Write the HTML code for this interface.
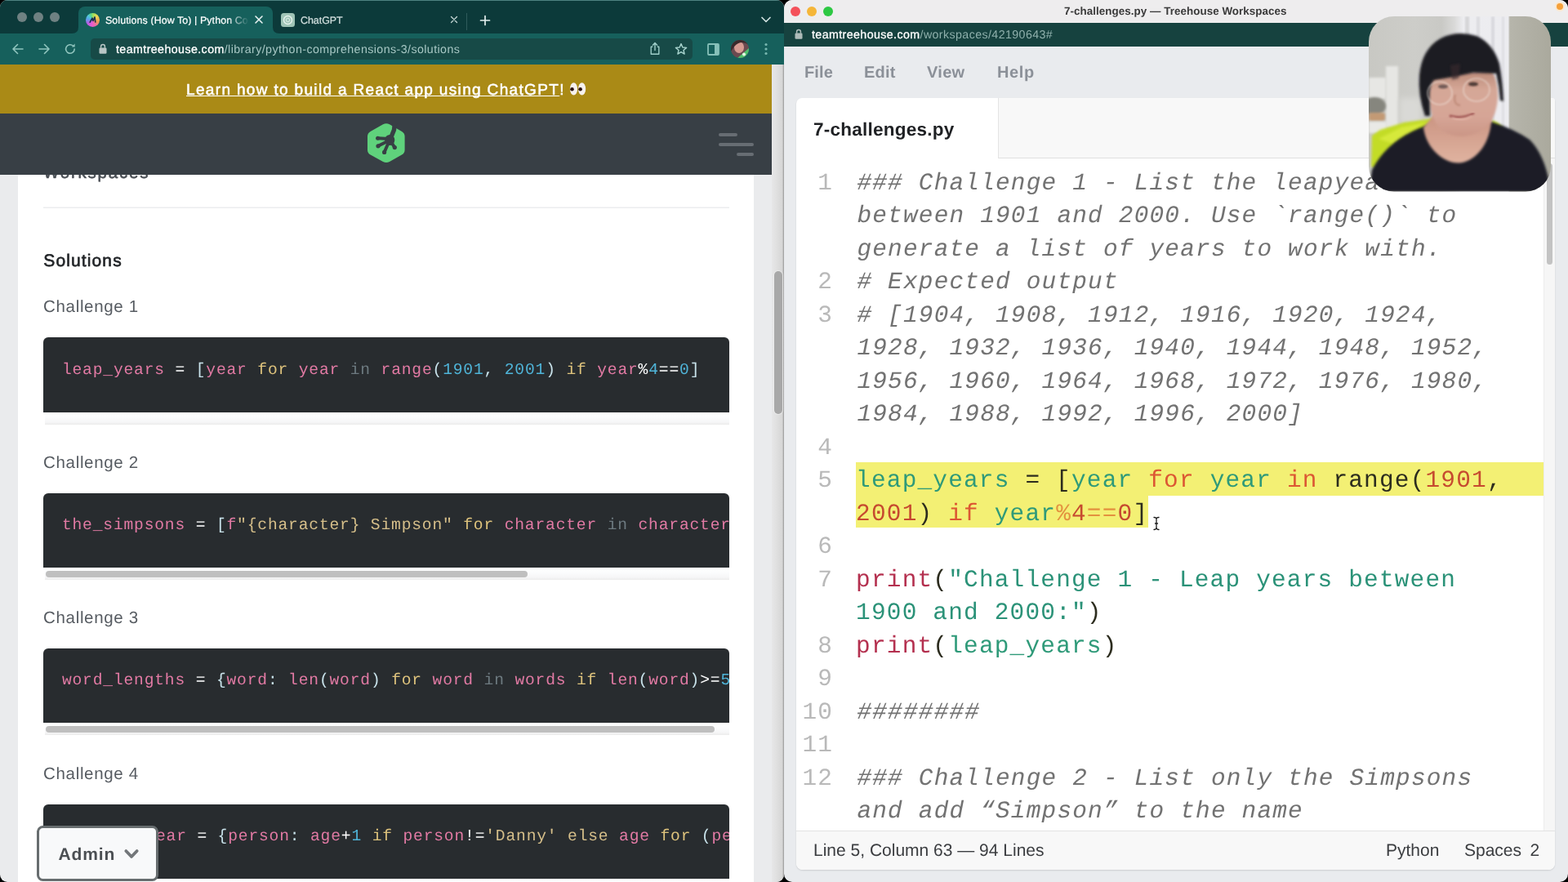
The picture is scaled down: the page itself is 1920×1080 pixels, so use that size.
<!DOCTYPE html><html lang="en"><head><meta charset="utf-8"><title>Solutions (How To) | Python Comprehensions</title><style>
*{box-sizing:border-box;margin:0;padding:0}
html,body{width:1920px;height:1080px;overflow:hidden;background:#000}
body{position:relative;text-rendering:geometricPrecision;font-family:"Liberation Sans",sans-serif;-webkit-font-smoothing:antialiased}
.abs{position:absolute}
.t{position:absolute;white-space:pre;line-height:1}
/* ---------- left window ---------- */
#lw{will-change:transform;position:absolute;left:0;top:0;width:960px;height:1080px;overflow:hidden;background:#eaebed;border-radius:9px 9px 9px 9px}
#tabstrip{position:absolute;left:0;top:0;width:960px;height:41px;background:#0c3a3a}
#ltopline{position:absolute;left:0;top:0;width:960px;height:1.3px;background:#4f8281}
#tab1{position:absolute;left:96px;top:8px;width:238px;height:33px;background:#16605c;border-radius:8px 8px 0 0}
#toolbar{position:absolute;left:0;top:41px;width:960px;height:38px;background:#16605c}
#urlbar{position:absolute;left:111px;top:46.5px;width:737px;height:26px;background:#174a47;border-radius:5px}
.tl{position:absolute;top:15px;width:12px;height:12px;border-radius:50%;background:#6f8182}
#banner{position:absolute;left:0;top:79px;width:945px;height:60px;background:#aa8a16}
#hdr{position:absolute;left:0;top:139px;width:945px;height:75px;background:#383f45}
#card{position:absolute;left:22px;top:214px;width:901px;height:866px;background:#fff}
#vsb{position:absolute;left:945px;top:79px;width:15px;height:1001px;background:linear-gradient(90deg,#e7e7e8 0,#e2e2e2 4px,#d6d6d6 13px,#a8a8a8 14.3px,#9c9c9c 15px)}
#vsbth{position:absolute;left:948.4px;top:332px;width:9.6px;height:174.5px;border-radius:5px;background:#a8a8a8;box-shadow:0 0 0 1px rgba(240,240,240,.7)}
.h3{position:absolute;left:53px;font-size:20.5px;color:#565b61;letter-spacing:.68px;white-space:pre;line-height:1}
.pre{position:absolute;left:53px;width:840px;height:92px;background:#282c2f;border-radius:6px 6px 0 0;overflow:hidden}
.pre code{position:absolute;left:22.9px;top:26.6px;font-family:"Liberation Mono",monospace;font-size:19.6px;letter-spacing:.84px;line-height:24px;white-space:pre;color:#e8eaec}
.trk{position:absolute;left:55px;width:838px;height:15px;background:linear-gradient(180deg,#fff 0,#fbfcfd 40%,#f6f6f7 80%,#ebebeb 100%)}
.thm{position:absolute;left:56px;height:8px;border-radius:4px;background:#bfbfbf}
.v{color:#e27aa4}.k{color:#dfc47d}.n{color:#4fb4d8}.g{color:#6d7a80}.p{color:#c8e2ea}.w{color:#fff}.s{color:#d6bf8a}
/* ---------- right window ---------- */
#rw{will-change:transform;position:absolute;left:960px;top:0;width:960px;height:1080px;overflow:hidden;background:#e9ebee;border-radius:10px}
#rtitle{position:absolute;left:0;top:0;width:960px;height:28px;background:#eeedee}
#raddr{position:absolute;left:0;top:28px;width:960px;height:28.5px;background:#16423f}
#ecard{position:absolute;left:15px;top:120px;width:929px;height:945px;background:#fff;border-radius:7px 4px 8px 8px;overflow:hidden;box-shadow:0 1px 2px rgba(0,0,0,.13)}
#etabbar{position:absolute;left:247px;top:0;width:682px;height:74px;background:#f8f8f8;border-left:1px solid #e4e4e4;border-bottom:1px solid #e0e0e0}
#egut{position:absolute;left:915px;top:74px;width:14px;height:824px;background:#f6f6f6;border-left:1px solid #ececec}
#eth{position:absolute;left:919px;top:80px;width:7px;height:124px;border-radius:4px;background:#c3c3c3}
#estat{position:absolute;left:0;top:897px;width:929px;height:48px;background:#f8f8f8;border-top:1px solid #e3e3e3}
.mn{position:absolute;top:79.2px;font-weight:bold;font-size:20px;color:#8b9098;line-height:1;white-space:pre}
.row{position:absolute;left:73.1px;height:40.5px;line-height:40.5px;font-family:"Liberation Mono",monospace;font-size:29.4px;white-space:pre;color:#2c2c1e;letter-spacing:1.21px}
.ln{position:absolute;left:0;width:45.2px;text-align:right;height:40.5px;line-height:40.5px;font-family:"Liberation Mono",monospace;font-size:29.4px;letter-spacing:1.21px;color:#b9b9b9;white-space:pre}
.c{font-style:italic;color:#727272;position:relative;left:1.3px}
.ev{color:#2f9a79}.ek{color:#dc5733}.en{color:#c64a2f}.eo{color:#e3913f}.ep{color:#b4304f}.es{color:#2b9278}
.sel{position:absolute;background:#f3f074}
</style></head><body>
<div id="lw">
<div id="tabstrip"></div><div id="ltopline"></div>
<div class="tl" style="left:21px"></div>
<div class="tl" style="left:41px"></div>
<div class="tl" style="left:61px"></div>
<div id="tab1"></div>
<svg class="abs" style="left:88px;top:33px" width="254" height="8" viewBox="0 0 254 8"><path d="M0 8 Q8 8 8 0 V8 Z M254 8 Q246 8 246 0 V8 Z" fill="#16605c"/></svg>
<div class="abs" style="left:104.5px;top:15.5px;width:17px;height:17px;border-radius:50%;background:conic-gradient(from -20deg,#58d68a 0,#a6e05a 8%,#f0d653 20%,#f09a55 36%,#ee6aa8 48%,#e45bd6 60%,#b45fe6 72%,#5aa6ea 84%,#52c8d8 93%,#58d68a 100%)"></div>
<svg class="abs" style="left:104.5px;top:15.5px" width="17" height="17" viewBox="0 0 17 17"><path d="M5.2 11.2 L8 6.2 L9 9.4 L11 5 L11.8 11" fill="none" stroke="#1d3350" stroke-width="1.7" stroke-linejoin="round" stroke-linecap="round"/></svg>
<div class="t" style="left:129px;top:18.6px;font-size:12.4px;color:#fff;letter-spacing:.1px;-webkit-text-stroke:.2px #fff;width:176px;overflow:hidden;-webkit-mask-image:linear-gradient(90deg,#000 150px,transparent 176px);mask-image:linear-gradient(90deg,#000 150px,transparent 176px)">Solutions (How To) | Python Comprehensions</div>
<svg class="abs" style="left:311px;top:18px" width="12" height="12" viewBox="0 0 12 12"><path d="M2 2 L10 10 M10 2 L2 10" stroke="#e9f3f2" stroke-width="1.6" stroke-linecap="round"/></svg>
<svg class="abs" style="left:344px;top:16px" width="17" height="17" viewBox="0 0 17 17"><rect x="0" y="0" width="17" height="17" rx="3.5" fill="#9fc4b6"/><circle cx="8.5" cy="8.5" r="5" fill="none" stroke="#e8f3ee" stroke-width="1.4"/><circle cx="8.5" cy="8.5" r="2.2" fill="none" stroke="#e8f3ee" stroke-width="1"/></svg>
<div class="t" style="left:368px;top:18.6px;font-size:12.4px;color:#d3e0df;-webkit-text-stroke:.2px #d3e0df">ChatGPT</div>
<svg class="abs" style="left:551px;top:19px" width="10" height="10" viewBox="0 0 10 10"><path d="M1.5 1.5 L8.5 8.5 M8.5 1.5 L1.5 8.5" stroke="#c4d6d5" stroke-width="1.3" stroke-linecap="round"/></svg>
<div class="abs" style="left:571px;top:16px;width:1px;height:21px;background:#2f5b5b"></div>
<svg class="abs" style="left:587px;top:18px" width="14" height="14" viewBox="0 0 14 14"><path d="M7 1.5 V12.5 M1.5 7 H12.5" stroke="#e3efee" stroke-width="1.7" stroke-linecap="round"/></svg>
<svg class="abs" style="left:931px;top:19px" width="14" height="10" viewBox="0 0 14 10"><path d="M2 2.5 L7 7.5 L12 2.5" fill="none" stroke="#cfe0df" stroke-width="1.7" stroke-linecap="round" stroke-linejoin="round"/></svg>
<div id="toolbar"></div><div id="urlbar"></div>
<svg class="abs" style="left:14px;top:52px" width="16" height="16" viewBox="0 0 16 16"><path d="M14 8 H2.5 M7.5 2.5 L2 8 L7.5 13.5" fill="none" stroke="#8fc4bd" stroke-width="1.6" stroke-linecap="round" stroke-linejoin="round"/></svg>
<svg class="abs" style="left:46px;top:52px" width="16" height="16" viewBox="0 0 16 16"><path d="M2 8 H13.5 M8.5 2.5 L14 8 L8.5 13.5" fill="none" stroke="#8fc4bd" stroke-width="1.6" stroke-linecap="round" stroke-linejoin="round"/></svg>
<svg class="abs" style="left:78px;top:52px" width="16" height="16" viewBox="0 0 16 16"><path d="M13.2 8 A5.3 5.3 0 1 1 11.6 4.2" fill="none" stroke="#8fc4bd" stroke-width="1.6" stroke-linecap="round"/><path d="M13.6 1.6 V5.4 H9.8 Z" fill="#8fc4bd"/></svg>
<svg class="abs" style="left:121px;top:53px" width="10" height="13" viewBox="0 0 10 13"><rect x="0.5" y="5.5" width="9" height="7.2" rx="1.3" fill="#b9c6c5"/><path d="M2.6 5.8 V3.8 A2.4 2.4 0 0 1 7.4 3.8 V5.8" fill="none" stroke="#b9c6c5" stroke-width="1.5"/></svg>
<div class="t" style="left:142px;top:53.7px;font-size:14.2px;letter-spacing:.43px;color:#a7c7c4"><span style="color:#fff;-webkit-text-stroke:.3px #fff">teamtreehouse.com</span>/library/python-comprehensions-3/solutions</div>
<svg class="abs" style="left:795px;top:51px" width="14" height="17" viewBox="0 0 14 17"><path d="M4.3 6.2 H2.2 V15.3 H11.8 V6.2 H9.7" fill="none" stroke="#9fcfc9" stroke-width="1.4" stroke-linejoin="round"/><path d="M7 10.5 V1.8 M4.4 4.2 L7 1.5 L9.6 4.2" fill="none" stroke="#9fcfc9" stroke-width="1.4" stroke-linecap="round" stroke-linejoin="round"/></svg>
<svg class="abs" style="left:826px;top:52px" width="16" height="16" viewBox="0 0 16 16"><path d="M8 1.6 L9.9 6 L14.6 6.4 L11 9.5 L12.1 14.1 L8 11.6 L3.9 14.1 L5 9.5 L1.4 6.4 L6.1 6 Z" fill="none" stroke="#a8d4ce" stroke-width="1.4" stroke-linejoin="round"/></svg>
<svg class="abs" style="left:866px;top:53px" width="15" height="15" viewBox="0 0 15 15"><rect x="1" y="1" width="13" height="13" rx="1" fill="none" stroke="#86c0b9" stroke-width="1.8"/><rect x="9" y="1" width="5" height="13" fill="#86c0b9"/></svg>
<svg class="abs" style="left:895px;top:49px" width="22" height="22" viewBox="0 0 22 22"><defs><clipPath id="av"><circle cx="11" cy="11" r="11"/></clipPath></defs><g clip-path="url(#av)"><rect width="22" height="22" fill="#6b4a50"/><ellipse cx="10" cy="9" rx="6" ry="7" fill="#d79b92"/><path d="M0 0 H22 V6 Q12 -1 4 8 L0 14Z" fill="#3a2a2c"/><path d="M8 22 L22 10 V22Z" fill="#4fc06e"/><circle cx="16" cy="17.5" r="2" fill="#e9f7e4"/></g></svg>
<svg class="abs" style="left:935px;top:51px" width="6" height="18" viewBox="0 0 6 18"><circle cx="3" cy="3.5" r="1.6" fill="#79b8b1"/><circle cx="3" cy="9" r="1.6" fill="#79b8b1"/><circle cx="3" cy="14.5" r="1.6" fill="#79b8b1"/></svg>
<div id="card"></div>
<div class="t" style="left:53px;top:201.7px;font-size:20.5px;color:#4a4f55;letter-spacing:1.78px;-webkit-text-stroke:.6px #4a4f55">Workspaces</div>
<div class="abs" style="left:53px;top:252.5px;width:840px;height:2.5px;background:linear-gradient(180deg,#fafafb,#e6e8ea)"></div>
<div class="t" style="left:53.3px;top:308.8px;font-size:21px;color:#222528;letter-spacing:1.12px;-webkit-text-stroke:.65px #222528">Solutions</div>
<div class="h3" style="top:365.6px">Challenge 1</div>
<div class="pre" style="top:413px;height:92px"><code style="top:27.7px"><span class="v">leap_years</span><span class="w"> = </span><span class="p">[</span><span class="v">year</span> <span class="k">for</span> <span class="v">year</span> <span class="g">in</span> <span class="v">range</span><span class="p">(</span><span class="n">1901</span><span class="p">,</span> <span class="n">2001</span><span class="p">)</span> <span class="k">if</span> <span class="v">year</span><span class="w">%</span><span class="n">4</span><span class="w">==</span><span class="n">0</span><span class="p">]</span></code></div>
<div class="trk" style="top:505px"></div>
<div class="h3" style="top:556.6px">Challenge 2</div>
<div class="pre" style="top:604px;height:90.5px"><code><span class="v">the_simpsons</span><span class="w"> = </span><span class="p">[</span><span class="v">f</span><span class="s">"{character} Simpson"</span> <span class="k">for</span> <span class="v">character</span> <span class="g">in</span> <span class="v">characters</span> <span class="k">if</span> <span class="s">"Simpson"</span> <span class="g">in</span> <span class="v">character</span><span class="p">]</span></code></div>
<div class="trk" style="top:694.5px"></div>
<div class="thm" style="top:699px;width:590px"></div>
<div class="h3" style="top:746.6px">Challenge 3</div>
<div class="pre" style="top:794.2px;height:91px"><code style="top:27.2px"><span class="v">word_lengths</span><span class="w"> = </span><span class="p">{</span><span class="v">word</span><span class="p">:</span> <span class="v">len</span><span class="p">(</span><span class="v">word</span><span class="p">)</span> <span class="k">for</span> <span class="v">word</span> <span class="g">in</span> <span class="v">words</span> <span class="k">if</span> <span class="v">len</span><span class="p">(</span><span class="v">word</span><span class="p">)</span><span class="w">&gt;=</span><span class="n">5</span><span class="p">}</span></code></div>
<div class="trk" style="top:885.2px"></div>
<div class="thm" style="top:889.2px;width:819px"></div>
<div class="h3" style="top:937.6px">Challenge 4</div>
<div class="pre" style="top:985px;height:91px"><code style="left:24.6px"><span class="v">ages_in_year</span><span class="w"> = </span><span class="p">{</span><span class="v">person</span><span class="p">:</span> <span class="v">age</span><span class="w">+</span><span class="n">1</span> <span class="k">if</span> <span class="v">person</span><span class="w">!=</span><span class="s">'Danny'</span> <span class="s">else</span> <span class="v">age</span> <span class="k">for</span> <span class="p">(</span><span class="v">person</span><span class="p">,</span> <span class="v">age</span><span class="p">)</span> <span class="g">in</span> <span class="v">ages</span><span class="p">.</span><span class="v">items</span><span class="p">()}</span></code></div>
<div class="trk" style="top:1076px"></div>
<div class="abs" style="left:45.4px;top:1010.9px;width:148.3px;height:68.6px;background:#f8f9fa;border:3px solid #676d6f;border-radius:7.5px"></div>
<div class="t" style="left:71.6px;top:1035.7px;font-weight:bold;font-size:21px;letter-spacing:.85px;color:#4b4f53">Admin</div>
<svg class="abs" style="left:149.6px;top:1037.4px" width="22" height="16" viewBox="0 0 22 16"><path d="M4.3 5 L11 12 L17.7 5" fill="none" stroke="#73777a" stroke-width="3.8" stroke-linecap="round" stroke-linejoin="round"/></svg>
<div id="banner"></div>
<div class="t" style="left:228px;top:101.2px;font-size:19px;color:#fff;letter-spacing:1.34px;-webkit-text-stroke:.55px #fff"><span style="text-decoration:underline;text-decoration-thickness:1.2px;text-underline-offset:.6px;text-decoration-skip-ink:none">Learn how to build a React app using ChatGPT</span>!</div>
<svg class="abs" style="left:696px;top:99px" width="24" height="20" viewBox="0 0 24 20"><ellipse cx="6.5" cy="9.9" rx="4.6" ry="7.7" fill="#f6f1ee"/><ellipse cx="16.6" cy="9.9" rx="4.6" ry="7.7" fill="#f6f1ee"/><circle cx="4.5" cy="10.3" r="2.3" fill="#2a1210"/><circle cx="14.6" cy="10.3" r="2.3" fill="#2a1210"/></svg>
<div id="hdr"></div>
<svg class="abs" style="left:448px;top:150px" width="50" height="50" viewBox="0 0 50 50">
<path d="M25 1.2 Q27 1.2 29 2.3 L44 11 Q47.6 13 47.6 17 V33.4 Q47.6 37.4 44 39.4 L29 48 Q25 50.2 21 48 L5.6 39.4 Q2 37.4 2 33.4 V17 Q2 13 5.6 11 L21 2.3 Q23 1.2 25 1.2Z" fill="#5fd27c"/>
<g stroke="#383f45" stroke-linecap="round" fill="none">
<path d="M35.5 0 L34.5 9 L30.5 19" stroke-width="5.4" stroke-linejoin="round"/>
<path d="M28.5 20 L14.6 19.3" stroke-width="3.9"/>
<path d="M27.5 22.5 L15 28.8" stroke-width="3.9"/>
<path d="M28 24 L22.6 36.4" stroke-width="3.9"/>
<path d="M30.5 23 L35.3 30.6" stroke-width="3.9"/>
</g>
<g fill="#383f45"><ellipse cx="29.3" cy="21.5" rx="6" ry="6.6"/><circle cx="14.6" cy="19.3" r="2.5"/><circle cx="15" cy="28.8" r="2.6"/><circle cx="22.6" cy="36.4" r="2.6"/><circle cx="35.3" cy="30.6" r="2.6"/></g>
</svg>
<div class="abs" style="left:880px;top:163px;width:23px;height:4px;border-radius:2px;background:#676d73"></div>
<div class="abs" style="left:880px;top:175px;width:43px;height:4px;border-radius:2px;background:#676d73"></div>
<div class="abs" style="left:902px;top:187px;width:21px;height:4px;border-radius:2px;background:#676d73"></div>
<div id="vsb"></div><div id="vsbth"></div>
</div>
<div id="rw">
<div id="rtitle"></div>
<div class="abs" style="left:8px;top:8px;width:12px;height:12px;border-radius:50%;background:#f4515a"></div>
<div class="abs" style="left:28px;top:8px;width:12px;height:12px;border-radius:50%;background:#f5b638"></div>
<div class="abs" style="left:48px;top:8px;width:12px;height:12px;border-radius:50%;background:#2dc843"></div>
<div class="t" style="left:343px;top:7px;font-weight:bold;font-size:13.4px;letter-spacing:.05px;color:#3a3a3a">7-challenges.py — Treehouse Workspaces</div>
<div class="abs" style="left:946px;top:4px;width:8px;height:8px;border-radius:50%;background:#f5a03a;box-shadow:0 0 0 2px #fbe8cf"></div>
<div id="raddr"></div>
<svg class="abs" style="left:13px;top:35px" width="10" height="13" viewBox="0 0 10 13"><rect x="0.5" y="5.5" width="9" height="7.2" rx="1.3" fill="#aebbb9"/><path d="M2.6 5.8 V3.8 A2.4 2.4 0 0 1 7.4 3.8 V5.8" fill="none" stroke="#aebbb9" stroke-width="1.5"/></svg>
<div class="t" style="left:34px;top:35.7px;font-size:14.2px;letter-spacing:.42px;color:#8fb0ac"><span style="color:#fff;-webkit-text-stroke:.3px #fff">teamtreehouse.com</span>/workspaces/42190643#</div>
<div class="mn" style="left:25px;letter-spacing:0.1px">File</div>
<div class="mn" style="left:98px;letter-spacing:0.2px">Edit</div>
<div class="mn" style="left:175px;letter-spacing:0.3px">View</div>
<div class="mn" style="left:261px;letter-spacing:0.6px">Help</div>
<div id="ecard">
<div id="etabbar"></div>
<div class="t" style="left:21px;top:28px;font-weight:bold;font-size:22.5px;letter-spacing:.25px;color:#1f2124">7-challenges.py</div>
<div class="sel" style="left:72.5px;top:446.4px;width:843px;height:41.1px"></div>
<div class="sel" style="left:72.5px;top:487.25px;width:358.5px;height:38.75px"></div>
<div class="ln" style="top:84.55px">1</div>
<div class="row" style="top:84.55px"><span class="c">### Challenge 1 - List the leapyears</span></div>
<div class="row" style="top:125.05px"><span class="c">between 1901 and 2000. Use `range()` to</span></div>
<div class="row" style="top:165.55px"><span class="c">generate a list of years to work with.</span></div>
<div class="ln" style="top:206.05px">2</div>
<div class="row" style="top:206.05px"><span class="c"># Expected output</span></div>
<div class="ln" style="top:246.55px">3</div>
<div class="row" style="top:246.55px"><span class="c"># [1904, 1908, 1912, 1916, 1920, 1924,</span></div>
<div class="row" style="top:287.05px"><span class="c">1928, 1932, 1936, 1940, 1944, 1948, 1952,</span></div>
<div class="row" style="top:327.55px"><span class="c">1956, 1960, 1964, 1968, 1972, 1976, 1980,</span></div>
<div class="row" style="top:368.05px"><span class="c">1984, 1988, 1992, 1996, 2000]</span></div>
<div class="ln" style="top:408.55px">4</div>
<div class="ln" style="top:449.05px">5</div>
<div class="row" style="top:449.05px"><span class="ev">leap_years</span> = [<span class="ev">year</span> <span class="ek">for</span> <span class="ev">year</span> <span class="ek">in</span> range(<span class="en">1901</span>,</div>
<div class="row" style="top:489.55px"><span class="en">2001</span>) <span class="ek">if</span> <span class="ev">year</span><span class="eo">%</span><span class="en">4</span><span class="eo">==</span><span class="en">0</span>]</div>
<div class="ln" style="top:530.05px">6</div>
<div class="ln" style="top:570.55px">7</div>
<div class="row" style="top:570.55px"><span class="ep">print</span>(<span class="es">"Challenge 1 - Leap years between</span></div>
<div class="row" style="top:611.05px"><span class="es">1900 and 2000:"</span>)</div>
<div class="ln" style="top:651.55px">8</div>
<div class="row" style="top:651.55px"><span class="ep">print</span>(<span class="ev">leap_years</span>)</div>
<div class="ln" style="top:692.05px">9</div>
<div class="ln" style="top:732.55px">10</div>
<div class="row" style="top:732.55px"><span class="c">########</span></div>
<div class="ln" style="top:773.05px">11</div>
<div class="ln" style="top:813.55px">12</div>
<div class="row" style="top:813.55px"><span class="c">### Challenge 2 - List only the Simpsons</span></div>
<div class="row" style="top:854.05px"><span class="c">and add “Simpson” to the name</span></div>
<div id="egut"></div><div id="eth"></div>
<div id="estat"></div>
<div class="t" style="left:21px;top:910.5px;font-size:21px;color:#3b3d40">Line 5, Column 63 — 94 Lines</div>
<div class="t" style="left:722px;top:910.5px;font-size:21px;color:#3b3d40">Python</div>
<div class="t" style="left:818px;top:910.5px;font-size:21px;color:#3b3d40;word-spacing:4.5px">Spaces 2</div>
</div>
<svg class="abs" style="left:451px;top:632px" width="10" height="18" viewBox="0 0 10 18"><path d="M2 1.5 Q5 1.5 5 4 V14 Q5 16.5 2 16.5 M8 1.5 Q5 1.5 5 4 M5 14 Q5 16.5 8 16.5 M3.5 9 H6.5" fill="none" stroke="#1a1a1a" stroke-width="1.3" stroke-linecap="round"/></svg>
<svg class="abs" style="left:716px;top:20px" width="223" height="215" viewBox="0 0 223 215">
<defs>
<clipPath id="wc"><rect x="0" y="0" width="223" height="214.6" rx="31" ry="31"/></clipPath>
<filter id="b1" x="-20%" y="-20%" width="140%" height="140%"><feGaussianBlur stdDeviation="0.9"/></filter>
<filter id="b2" x="-20%" y="-20%" width="140%" height="140%"><feGaussianBlur stdDeviation="1.7"/></filter>
<filter id="b4" x="-20%" y="-20%" width="140%" height="140%"><feGaussianBlur stdDeviation="3.5"/></filter>
<linearGradient id="wbg" x1="0" y1="0" x2="1" y2="0"><stop offset="0" stop-color="#c8c8c3"/><stop offset=".25" stop-color="#cdcdc9"/><stop offset=".4" stop-color="#c9c9c5"/><stop offset=".47" stop-color="#d9d9d8"/><stop offset=".52" stop-color="#ededf0"/><stop offset=".765" stop-color="#ececf0"/><stop offset=".775" stop-color="#b6b5ab"/><stop offset="1" stop-color="#aaa99d"/></linearGradient>
<linearGradient id="skin" x1="0" y1="0" x2="0" y2="1"><stop offset="0" stop-color="#b98977"/><stop offset=".3" stop-color="#d5a797"/><stop offset=".7" stop-color="#d6a596"/><stop offset="1" stop-color="#cb9686"/></linearGradient>
<linearGradient id="neck" x1="0" y1="0" x2="0" y2="1"><stop offset="0" stop-color="#c99280"/><stop offset="1" stop-color="#e0b3a0"/></linearGradient>
</defs>
<g clip-path="url(#wc)">
<rect width="223" height="215" fill="url(#wbg)"/>
<rect x="118" y="0" width="5" height="140" fill="#d6d6d8" filter="url(#b1)"/>
<rect x="132" y="0" width="4" height="140" fill="#dcdce0" filter="url(#b1)"/>
<rect x="150" y="0" width="4" height="140" fill="#d9d9de" filter="url(#b1)"/>
<rect x="163" y="0" width="3" height="140" fill="#dedee2" filter="url(#b1)"/>
<rect x="21" y="61" width="15" height="76" fill="#e6e6e3" filter="url(#b2)"/>
<rect x="0" y="75" width="21" height="26" fill="#e7e7e4" filter="url(#b2)"/>
<rect x="38" y="100" width="26" height="32" fill="#d9d9d6" filter="url(#b4)"/>
<ellipse cx="7" cy="110" rx="14" ry="11" fill="#86867e" filter="url(#b2)"/>
<rect x="0" y="118" width="20" height="10" rx="3" fill="#c39a74" filter="url(#b2)"/>
<rect x="0" y="129" width="22" height="14" fill="#e9e9e6" filter="url(#b2)"/>
<path d="M4 146 L14 139 L43 130 L83 124.5 L86 132 L30 160 L8 186 L3 184 Z" fill="#c3dc28" filter="url(#b2)"/>
<path d="M12 150 L40 136 L70 130 L30 156 Z" fill="#d6e93a" filter="url(#b2)"/>
<path d="M150 127 L158 130 L165 137 L152 138 Z" fill="#c3dc28" filter="url(#b2)"/>
<path d="M0 215 L4 188 Q24 150 70 134 L84 127 L150 129 Q178 138 197 151 Q212 166 219 194 L223 215 Z" fill="#1a1c27" filter="url(#b2)"/>
<path d="M67 136 C 70 162, 92 180, 110 179.5 C 128 179, 147 160, 150 130 L150 118 L80 120 Z" fill="url(#neck)" filter="url(#b2)"/>
<path d="M73.5 100 Q72 80 80 70 L150 66 Q159 80 158 100 Q156 128 138 140 Q112 154 90 140 Q76 128 73.5 100 Z" fill="url(#skin)" filter="url(#b2)"/>
<path d="M69 122 Q60 96 62 72 Q65 40 88 27 Q108 17 132 24 Q152 33 160 58 Q164 80 165 104 L161 103 Q160 86 156 70 L128 69 L104 74 L80 78 Q74 84 74.5 100 L75 122 Z" fill="#1b1a20" filter="url(#b2)"/>
<path d="M100 60 L112 58 L110 76 L102 78 Z" fill="#3a2a2e" opacity=".6" filter="url(#b2)"/>
<ellipse cx="87" cy="94" rx="15" ry="14" fill="none" stroke="#efe3db" stroke-width="1.5" opacity=".6" filter="url(#b1)"/>
<ellipse cx="132" cy="90" rx="16" ry="14" fill="none" stroke="#efe3db" stroke-width="1.5" opacity=".6" filter="url(#b1)"/>
<ellipse cx="91" cy="86" rx="6" ry="2.4" fill="#5a4a48" opacity=".8" filter="url(#b1)"/>
<ellipse cx="128" cy="83" rx="6" ry="2.4" fill="#3a2a28" opacity=".85" filter="url(#b1)"/>
<path d="M106 96 Q103 108 112 109" fill="none" stroke="#b57f6c" stroke-width="2.4" opacity=".6" filter="url(#b1)"/>
<path d="M100 122 Q113 126 128 119" fill="none" stroke="#a45c58" stroke-width="3" stroke-linecap="round" filter="url(#b1)"/>
<path d="M102 124 Q114 130 126 122" fill="none" stroke="#e3b3a6" stroke-width="1.6" stroke-linecap="round" filter="url(#b1)"/>
</g>
</svg>

</div>
</body></html>
